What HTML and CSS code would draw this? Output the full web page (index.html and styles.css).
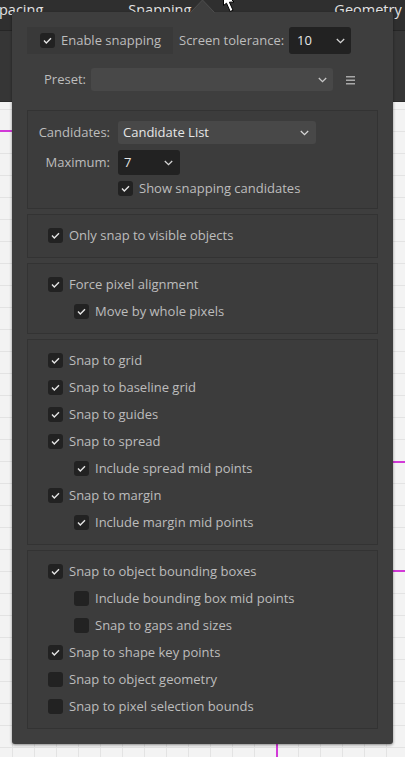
FILE: index.html
```html
<!DOCTYPE html>
<html>
<head>
<meta charset="utf-8">
<link rel="stylesheet" href="styles.css">
</head>
<body>
<div class="app">
  <div class="tabs">
    <span class="tab tab-spacing">Spacing</span>
    <span class="tab tab-snapping">Snapping</span>
    <span class="tab tab-geometry">Geometry</span>
  </div>
  <div class="toolbar"></div>
  <div class="canvas">
    <div class="guide guide-h gh1"></div>
    <div class="guide guide-h gh2"></div>
    <div class="guide guide-h gh3"></div>
    <div class="guide guide-v gv1"></div>
  </div>
</div>

<div class="popup">
  <svg class="popup-arrow" width="26" height="14" viewBox="0 0 26 14"><path d="M0.5 13.5 L12.5 1 L24.5 13.5" fill="#3e3e3e" stroke="#4e4e4e" stroke-width="1"/></svg>

  <div class="row-top">
    <div class="enable-box">
      <span class="cb on"><svg width="15" height="15" viewBox="0 0 15 15"><polyline points="4,7.6 6.3,9.9 11,5.2" fill="none" stroke="#e6e6e6" stroke-width="1.4"/></svg></span>
      <span class="txt">Enable snapping</span>
    </div>
    <span class="lbl tol-lbl">Screen tolerance:</span>
    <div class="select dark sel-tol"><span class="val">10</span><svg class="chev" width="9" height="6" viewBox="0 0 9 6"><polyline points="0.8,1 4.5,4.6 8.2,1" fill="none" stroke="#d6d6d6" stroke-width="1.3"/></svg></div>
  </div>

  <div class="row-preset">
    <span class="lbl">Preset:</span>
    <div class="select light sel-preset"><span class="val"></span><svg class="chev" width="9" height="6" viewBox="0 0 9 6"><polyline points="0.8,1 4.5,4.6 8.2,1" fill="none" stroke="#c8c8c8" stroke-width="1.3"/></svg></div>
    <svg class="menu-icon" width="10" height="10" viewBox="0 0 10 10"><rect x="0" y="1" width="9" height="1.5" fill="#a8a8a8"/><rect x="0" y="4.5" width="9" height="1.5" fill="#a8a8a8"/><rect x="0" y="8" width="9" height="1.5" fill="#a8a8a8"/></svg>
  </div>

  <div class="group group-cand">
    <div class="cand-row r1">
      <span class="lbl glbl">Candidates:</span>
      <div class="select light sel-cand"><span class="val">Candidate List</span><svg class="chev" width="9" height="6" viewBox="0 0 9 6"><polyline points="0.8,1 4.5,4.6 8.2,1" fill="none" stroke="#d6d6d6" stroke-width="1.3"/></svg></div>
    </div>
    <div class="cand-row r2">
      <span class="lbl glbl">Maximum:</span>
      <div class="select dark sel-max"><span class="val">7</span><svg class="chev" width="9" height="6" viewBox="0 0 9 6"><polyline points="0.8,1 4.5,4.6 8.2,1" fill="none" stroke="#d6d6d6" stroke-width="1.3"/></svg></div>
    </div>
    <div class="cand-row r3">
      <span class="glbl"></span>
      <div class="check-inline">
        <span class="cb on"><svg width="15" height="15" viewBox="0 0 15 15"><polyline points="4,7.6 6.3,9.9 11,5.2" fill="none" stroke="#e6e6e6" stroke-width="1.4"/></svg></span>
        <span class="txt">Show snapping candidates</span>
      </div>
    </div>
  </div>

  <div class="group">
    <div class="item"><span class="cb on"><svg width="15" height="15" viewBox="0 0 15 15"><polyline points="4,7.6 6.3,9.9 11,5.2" fill="none" stroke="#e6e6e6" stroke-width="1.4"/></svg></span><span class="txt">Only snap to visible objects</span></div>
  </div>

  <div class="group">
    <div class="item"><span class="cb on"><svg width="15" height="15" viewBox="0 0 15 15"><polyline points="4,7.6 6.3,9.9 11,5.2" fill="none" stroke="#e6e6e6" stroke-width="1.4"/></svg></span><span class="txt">Force pixel alignment</span></div>
    <div class="item sub"><span class="cb on"><svg width="15" height="15" viewBox="0 0 15 15"><polyline points="4,7.6 6.3,9.9 11,5.2" fill="none" stroke="#e6e6e6" stroke-width="1.4"/></svg></span><span class="txt">Move by whole pixels</span></div>
  </div>

  <div class="group">
    <div class="item"><span class="cb on"><svg width="15" height="15" viewBox="0 0 15 15"><polyline points="4,7.6 6.3,9.9 11,5.2" fill="none" stroke="#e6e6e6" stroke-width="1.4"/></svg></span><span class="txt">Snap to grid</span></div>
    <div class="item"><span class="cb on"><svg width="15" height="15" viewBox="0 0 15 15"><polyline points="4,7.6 6.3,9.9 11,5.2" fill="none" stroke="#e6e6e6" stroke-width="1.4"/></svg></span><span class="txt">Snap to baseline grid</span></div>
    <div class="item"><span class="cb on"><svg width="15" height="15" viewBox="0 0 15 15"><polyline points="4,7.6 6.3,9.9 11,5.2" fill="none" stroke="#e6e6e6" stroke-width="1.4"/></svg></span><span class="txt">Snap to guides</span></div>
    <div class="item"><span class="cb on"><svg width="15" height="15" viewBox="0 0 15 15"><polyline points="4,7.6 6.3,9.9 11,5.2" fill="none" stroke="#e6e6e6" stroke-width="1.4"/></svg></span><span class="txt">Snap to spread</span></div>
    <div class="item sub"><span class="cb on"><svg width="15" height="15" viewBox="0 0 15 15"><polyline points="4,7.6 6.3,9.9 11,5.2" fill="none" stroke="#e6e6e6" stroke-width="1.4"/></svg></span><span class="txt">Include spread mid points</span></div>
    <div class="item"><span class="cb on"><svg width="15" height="15" viewBox="0 0 15 15"><polyline points="4,7.6 6.3,9.9 11,5.2" fill="none" stroke="#e6e6e6" stroke-width="1.4"/></svg></span><span class="txt">Snap to margin</span></div>
    <div class="item sub"><span class="cb on"><svg width="15" height="15" viewBox="0 0 15 15"><polyline points="4,7.6 6.3,9.9 11,5.2" fill="none" stroke="#e6e6e6" stroke-width="1.4"/></svg></span><span class="txt">Include margin mid points</span></div>
  </div>

  <div class="group">
    <div class="item"><span class="cb on"><svg width="15" height="15" viewBox="0 0 15 15"><polyline points="4,7.6 6.3,9.9 11,5.2" fill="none" stroke="#e6e6e6" stroke-width="1.4"/></svg></span><span class="txt">Snap to object bounding boxes</span></div>
    <div class="item sub"><span class="cb"></span><span class="txt">Include bounding box mid points</span></div>
    <div class="item sub"><span class="cb"></span><span class="txt">Snap to gaps and sizes</span></div>
    <div class="item"><span class="cb on"><svg width="15" height="15" viewBox="0 0 15 15"><polyline points="4,7.6 6.3,9.9 11,5.2" fill="none" stroke="#e6e6e6" stroke-width="1.4"/></svg></span><span class="txt">Snap to shape key points</span></div>
    <div class="item"><span class="cb"></span><span class="txt">Snap to object geometry</span></div>
    <div class="item"><span class="cb"></span><span class="txt">Snap to pixel selection bounds</span></div>
  </div>
</div>

<svg class="cursor" width="16" height="13" viewBox="0 0 16 13"><path d="M1.5 -2 L1.5 5.5 L4.5 3.2 L8.2 11.5 L11 10.2 L7.4 2.2 L12 2 L4 -6 Z" fill="#ffffff" stroke="#000000" stroke-width="1"/></svg>
</body>
</html>
```

FILE: styles.css
```css
html, body {
  margin: 0;
  padding: 0;
}
body {
  width: 405px;
  height: 757px;
  overflow: hidden;
  position: relative;
  font-family: "Open Sans", "Noto Sans", "Liberation Sans", sans-serif;
  background: #f3f3f3;
}
.app {
  display: flex;
  flex-direction: column;
  height: 757px;
}
.tabs {
  height: 30px;
  flex: none;
  background: #2f2f2f;
  border-bottom: 1px solid #262626;
  display: flex;
  align-items: flex-start;
  color: #e2e2e2;
  font-size: 14.5px;
  line-height: 20px;
  white-space: nowrap;
  overflow: hidden;
}
.tab {
  display: block;
}
.tab-spacing { margin-left: -9px; }
.tab-snapping { margin-left: 85px; }
.tab-geometry { margin-left: 143px; }
.toolbar {
  height: 70px;
  flex: none;
  background: #363636;
  border-bottom: 1px solid #2b2b2b;
}
.canvas {
  flex: 1;
  position: relative;
  background-color: #f3f3f3;
  background-image:
    linear-gradient(to right, #e3e3e3 1px, transparent 1px),
    linear-gradient(to bottom, #e3e3e3 1px, transparent 1px);
  background-size: 22px 22px;
  background-position: 12px 7px;
}
.guide {
  position: absolute;
  background: #d23ad8;
}
.guide-h { height: 1.5px; }
.gh1 { top: 28px; left: 0; width: 14px; }
.gh2 { top: 359px; left: 390px; right: 0; }
.gh3 { top: 468px; left: 390px; right: 0; }
.guide-v { width: 1.5px; top: 600px; bottom: 0; left: 276px; }

.popup {
  position: absolute;
  left: 12px;
  top: 12px;
  width: 381px;
  height: 732px;
  box-sizing: border-box;
  padding: 15px;
  background: #3e3e3e;
  border-radius: 3px;
  box-shadow: 0 1px 3px rgba(0,0,0,0.45);
  color: #bdbdbd;
  font-size: 13px;
}
.popup-arrow {
  position: absolute;
  left: 178px;
  top: -13px;
}
.cb {
  width: 15px;
  height: 15px;
  flex: none;
  border-radius: 3px;
  background: #222222;
  display: flex;
}
.txt {
  margin-left: 6px;
  white-space: nowrap;
  line-height: 17px;
}
.lbl { white-space: nowrap; line-height: 17px; }

.row-top {
  display: flex;
  align-items: center;
  height: 27px;
}
.enable-box {
  width: 146px;
  height: 27px;
  background: #393939;
  box-sizing: border-box;
  padding-left: 13px;
  display: flex;
  align-items: center;
}
.tol-lbl { margin-left: 6px; }
.select {
  display: flex;
  align-items: center;
  box-sizing: border-box;
  border-radius: 3px;
  color: #e6e6e6;
  font-size: 13px;
}
.select .val { flex: 1; white-space: nowrap; line-height: 17px; }
.select .chev { flex: none; }
.select.dark { background: #222222; }
.select.light { background: #484848; }
.sel-tol {
  width: 62px;
  height: 27px;
  margin-left: auto;
  margin-right: 27px;
  padding: 0 6px 0 8px;
}
.row-preset {
  display: flex;
  align-items: center;
  height: 23px;
  margin-top: 14px;
  padding-left: 17px;
}
.sel-preset {
  width: 242px;
  height: 23px;
  margin-left: auto;
  padding: 0 6px 0 8px;
  background: #464646;
}
.menu-icon { margin-left: 13px; margin-right: 22px; }

.group {
  margin-top: 5px;
  border: 1px solid #333333;
  background: #3c3c3c;
  padding: 7px 0 8px 0;
}
.group-cand {
  margin-top: 19px;
  padding: 10px 0 7px 0;
}
.cand-row {
  display: flex;
  align-items: center;
}
.cand-row.r1 { height: 23px; }
.cand-row.r2 { height: 25px; margin-top: 6px; }
.cand-row.r3 { height: 25px; margin-top: 1px; }
.glbl {
  width: 82px;
  flex: none;
  text-align: right;
}
.sel-cand {
  width: 198px;
  height: 23px;
  margin-left: 8px;
  padding: 0 7px 0 5px;
}
.sel-max {
  width: 62px;
  height: 25px;
  margin-left: 8px;
  padding: 0 7px 0 6px;
}
.check-inline {
  margin-left: 8px;
  display: flex;
  align-items: center;
}
.item {
  height: 27px;
  display: flex;
  align-items: center;
  padding-left: 20px;
}
.item.sub { padding-left: 46px; }

.cursor {
  position: absolute;
  left: 222px;
  top: 0;
}
```
